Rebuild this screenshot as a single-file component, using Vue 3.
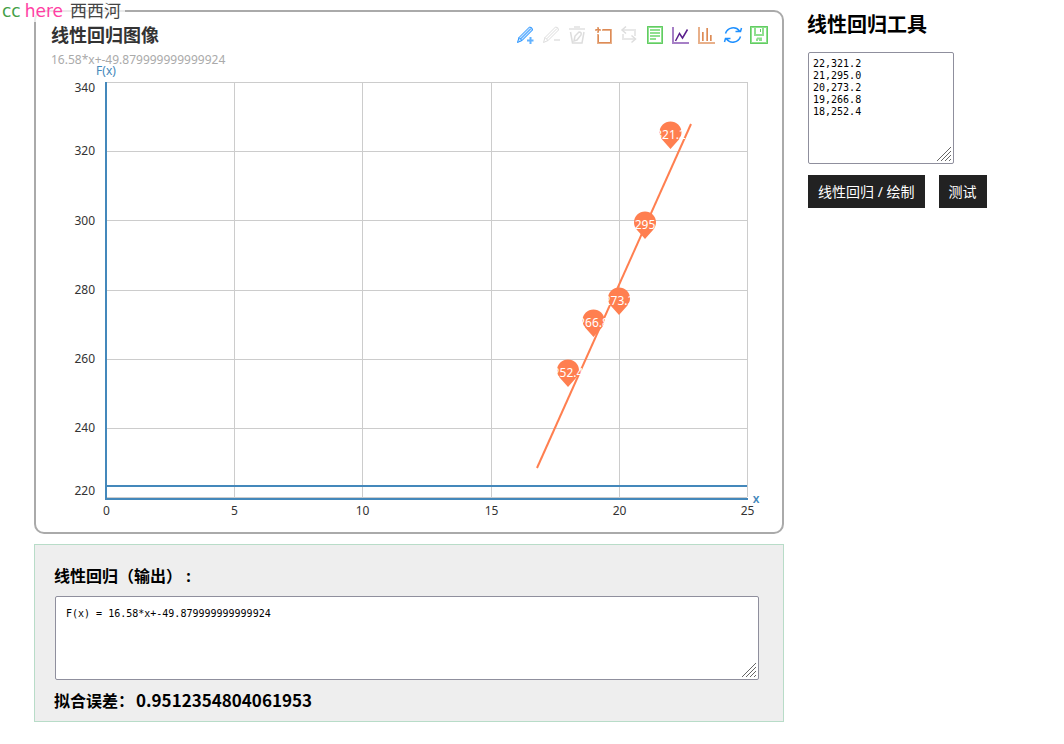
<script setup>
import { ref } from 'vue'

const samples = ref('22,321.2\n21,295.0\n20,273.2\n19,266.8\n18,252.4')
const formula = ref('F(x) = 16.58*x+-49.879999999999924')
const error = '0.9512354804061953'

const left = 70
const right = 711
const top = 14
const bottom = 429

const xTicks = [
  { label: 0, x: 70 },
  { label: 5, x: 198 },
  { label: 10, x: 326 },
  { label: 15, x: 455 },
  { label: 20, x: 583 },
  { label: 25, x: 711 },
]
const yTicks = [
  { label: 340, y: 14, text: 20 },
  { label: 320, y: 83, text: 83 },
  { label: 300, y: 152, text: 153 },
  { label: 280, y: 222, text: 222 },
  { label: 260, y: 291, text: 291 },
  { label: 240, y: 360, text: 360 },
  { label: 220, y: 429, text: 423 },
]
const pins = [
  { label: '252.4', x: 532, y: 302 },
  { label: '266.8', x: 557.5, y: 252 },
  { label: '273.2', x: 583, y: 230 },
  { label: '295', x: 609, y: 154 },
  { label: '321.2', x: 634.5, y: 64 },
]
</script>

<template>
  <main class="page">
    <div class="brand"><span class="brand-cc">cc</span><span class="brand-here">here</span><span class="brand-name">西西河</span></div>

    <div class="results">
      <section class="card">
        <header class="card-head">
          <div>
            <h2 class="chart-title">线性回归图像</h2>
            <p class="chart-sub">16.58*x+-49.879999999999924</p>
          </div>
          <div class="toolbar">
            <button type="button" class="tool blue" aria-label="辅助线开关">
              <svg viewBox="0 0 18 18"><path class="tint" d="M2 16 L3 12 L14 1 L17 4 L6 15 Z" /><path d="M1.5 16.5 L3 11.5 L13.5 1 Q16.5 1 16.5 4 L6 14.5 Z M4.5 13 L15 2.5 M3 11.5 L6 14.5" /><path class="soft" d="M11 14.5 H17.5 M14.5 11 V18" /></svg>
            </button>
            <button type="button" class="tool gray" aria-label="删除辅助线">
              <svg viewBox="0 0 18 18"><path d="M1.5 16.5 L3 11.5 L13.5 1 Q16.5 1 16.5 4 L6 14.5 Z M4.5 13 L15 2.5 M3 11.5 L6 14.5" /><path class="wide" d="M12 14 H18" /></svg>
            </button>
            <button type="button" class="tool gray" aria-label="清空辅助线">
              <svg viewBox="0 0 18 18"><path class="wide" d="M1 3 H17 M6 1 H12" /><path class="medium" d="M2.5 6 L4.5 17 H14 L16 6 M6 15 L7 10 L11 6 Q14 6 13 9 L9 14 Z" /></svg>
            </button>
            <button type="button" class="tool orange" aria-label="区域缩放">
              <svg viewBox="0 0 18 18"><path class="wide" d="M1 4 H7 M4 1 V7 M8 4 H17 V17 H4 V8" /><path class="deep" d="M2 3.5 H6 M4.5 2 V6 M9 3.5 H16.5 V16.5 H4.5 V9" /></svg>
            </button>
            <button type="button" class="tool gray" aria-label="区域缩放后退">
              <svg viewBox="0 0 18 18"><path class="wide" d="M2.5 4 H15 V10 M3 8 V13 H15" /><path class="medium" d="M6 .5 L2 4 L6 7.5 M11.5 9.5 L15.5 13 L11.5 16.5" /></svg>
            </button>
            <button type="button" class="tool green" aria-label="数据视图">
              <svg viewBox="0 0 18 18"><path class="wide" d="M2 1 H16 V17 H2 Z M4 4 H14 M4 7 H14 M4 10 H14 M4 13 H10" /><path class="deep" d="M1.5 .5 H16.5 V17.5 H1.5 Z" /></svg>
            </button>
            <button type="button" class="tool purple" aria-label="折线图切换">
              <svg viewBox="0 0 18 18"><path class="wide" d="M1 1 V17 H17" /><path class="medium" d="M3.5 15 L7.5 7.5 L10.5 12 L15.5 3.5" /></svg>
            </button>
            <button type="button" class="tool orange" aria-label="柱形图切换">
              <svg viewBox="0 0 18 18"><path class="wide" d="M1 1 V17 H17 M5 15 V6 M9 15 V2 M13 15 V9" /><path class="deep" d="M4.5 15 V6 M9.5 15 V2 M12.5 15 V9" /></svg>
            </button>
            <button type="button" class="tool blue" aria-label="还原">
              <svg viewBox="0 0 18 18"><path class="medium" d="M1.5 7.5 A8 8 0 0 1 15.5 5 M11.5 5.5 H16.5 L17.5 2 M16.5 10.5 A8 8 0 0 1 2.5 13 M6.5 12.5 H1.5 L.5 16" /></svg>
            </button>
            <button type="button" class="tool green" aria-label="保存为图片">
              <svg viewBox="0 0 18 18"><path class="wide" d="M1 1 H17 V17 H1 Z M5 1 V9 H13 V1 M7 12.5 V15 M7 12.5 H11 V15 M9 14 H11" /><path class="deep" d="M.5 .5 H17.5 V17.5 H.5 Z M10.5 3 V6" /></svg>
            </button>
          </div>
        </header>

        <svg class="chart" viewBox="0 0 746 464" role="img" aria-label="线性回归图像">
          <g class="grid">
            <path v-for="t in yTicks" :key="'h' + t.label" :d="`M${left} ${t.y}.5 H${right}`" />
            <path v-for="t in xTicks" :key="'v' + t.label" :d="`M${t.x}.5 ${top} V${bottom}`" />
          </g>
          <path class="axis" d="M70 14 V432 M69 431 H712 M70 418 H711" />
          <text class="axis-name" x="70" y="7">F(x)</text>
          <text class="axis-name strong" x="720" y="435">x</text>
          <text v-for="t in yTicks" :key="'y' + t.label" class="tick end" x="59" :y="t.text + 4">{{ t.label }}</text>
          <text v-for="t in xTicks" :key="'x' + t.label" class="tick" :x="t.x + 0.5" y="447">{{ t.label }}</text>
          <path class="fit" d="M501 400 L655 56" />
          <g v-for="p in pins" :key="p.label">
            <path class="pin" :d="`M${p.x} ${p.y + 17} l-8 -9 a11 11 0 1 1 16 0 z`" />
            <text class="pin-text" :x="p.x" :y="p.y + 7">{{ p.label }}</text>
          </g>
        </svg>
      </section>

      <section class="output">
        <h3><label for="formula">线性回归（输出） :</label></h3>
        <div class="field">
          <textarea id="formula" v-model="formula" class="formula" spellcheck="false"></textarea>
          <svg class="grip" viewBox="0 0 14 14"><path d="M0 14 L14 0 M4 14 L14 4 M8 14 L14 8 M12 14 L14 12" /></svg>
        </div>
        <h3>拟合误差：<span class="number">{{ error }}</span></h3>
      </section>
    </div>

    <aside class="side">
      <h1><label for="samples">线性回归工具</label></h1>
      <div class="field data">
        <textarea id="samples" v-model="samples" class="samples" spellcheck="false"></textarea>
        <svg class="grip" viewBox="0 0 14 14"><path d="M0 14 L14 0 M4 14 L14 4 M8 14 L14 8 M12 14 L14 12" /></svg>
      </div>
      <div class="actions">
        <button type="button" class="action">线性回归 / 绘制</button>
        <button type="button" class="action">测试</button>
      </div>
    </aside>
  </main>
</template>

<style>
body {
  margin: 0;
  background: #fff;
}
</style>

<style scoped>
.page {
  position: relative;
  display: grid;
  grid-template-columns: minmax(0, 1fr) 256px;
  column-gap: 24px;
  padding: 10px 0 22px 34px;
  color: #000;
  font-family: "Noto Sans", "Noto Sans CJK SC", sans-serif;
}

h1, h2, h3, p {
  margin: 0;
}

.brand {
  position: absolute;
  z-index: 1;
  top: 0;
  left: 0;
  display: flex;
  gap: 4px;
  padding: 0 4px 0 2px;
  background: rgba(255, 255, 255, 0.75);
  font: 17px/22px "DejaVu Sans", "Noto Sans CJK SC", sans-serif;
}
.brand-cc { color: #43a047; }
.brand-here { color: #ff3fa4; }
.brand-name { padding-left: 3px; color: #444; }

.results {
  display: flex;
  flex-direction: column;
  gap: 10px;
}

.card {
  border: 2px solid #aaa;
  border-radius: 10px;
}
.card-head {
  display: flex;
  justify-content: space-between;
  padding: 11px 10px 0 15px;
}
.chart-title {
  color: #333;
  font-size: 18px;
  line-height: 24px;
}
.chart-sub {
  margin-top: 5px;
  color: #aaa;
  font-size: 12px;
  line-height: 16px;
}
.toolbar {
  display: flex;
  padding-top: 3px;
}
.tool {
  width: 26px;
  height: 18px;
  padding: 0 4px;
  border: 0;
  background: none;
  cursor: pointer;
}
.tool svg {
  display: block;
  width: 18px;
  height: 18px;
  overflow: visible;
  fill: none;
  stroke-width: 1;
}
.tool .wide { stroke-width: 2; }
.tool .medium { stroke-width: 1.5; }
.blue { stroke: #1e90ff; }
.blue .tint { fill: #c4e1ff; stroke: none; }
.blue .soft { stroke: #62b2ff; stroke-width: 2; }
.gray { stroke: #ddd; }
.gray .wide { stroke: #e8e8e8; }
.orange .wide { stroke: #e8b08a; }
.orange .deep { stroke: #dd8b56; }
.green .wide { stroke: #8fe08f; }
.green .deep { stroke: #62cc62; }
.purple { stroke: #5a1f8c; }
.purple .wide { stroke: #a67fc6; }

.chart {
  display: block;
  width: 100%;
  overflow: visible;
  font-family: "Noto Sans", "Noto Sans CJK SC", sans-serif;
  font-size: 12px;
}
.grid { stroke: #ccc; }
.axis {
  fill: none;
  stroke: #48b;
  stroke-width: 2;
}
.axis-name {
  fill: #48b;
  text-anchor: middle;
}
.strong { font-weight: 600; }
.tick {
  fill: #333;
  text-anchor: middle;
}
.end { text-anchor: end; }
.fit {
  stroke: #ff7f50;
  stroke-width: 2;
}
.pin { fill: #ff7f50; }
.pin-text {
  fill: #fff;
  text-anchor: middle;
}

.output {
  padding: 19px 24px 8px 19px;
  border: 1px solid #b8dcc8;
  background: #eee;
}
.output h3 {
  font-size: 16px;
  line-height: 24px;
}
.number {
  margin-left: 2px;
  font-family: "Noto Sans CJK SC", sans-serif;
  font-size: 17px;
  line-height: 20px;
}
.output .field { margin: 8px 0 9px 1px; }
.field {
  position: relative;
}
.field textarea {
  display: block;
  box-sizing: border-box;
  width: 100%;
  margin: 0;
  border: 1px solid #8f8f9d;
  border-radius: 2px;
  outline: 0;
  background: #fff;
  color: #000;
  font: 10px/12px "DejaVu Sans Mono", monospace;
  resize: none;
}
.field .formula {
  height: 84px;
  padding: 11px 10px;
}
.field .samples {
  height: 112px;
  padding: 5px 4px;
}
.grip {
  position: absolute;
  right: 3px;
  bottom: 3px;
  width: 14px;
  height: 14px;
  fill: none;
  stroke: #666;
  pointer-events: none;
}

.side h1 {
  margin-left: -1px;
  font-size: 20px;
  line-height: 30px;
}
.data {
  width: 146px;
  margin-top: 12px;
}
.actions {
  display: flex;
  gap: 14px;
  margin-top: 11px;
}
.action {
  height: 33px;
  padding: 0 10px 2px;
  border: 0;
  background: #222;
  color: #fff;
  font-family: inherit;
  font-size: 14px;
  white-space: nowrap;
  cursor: pointer;
}
</style>
